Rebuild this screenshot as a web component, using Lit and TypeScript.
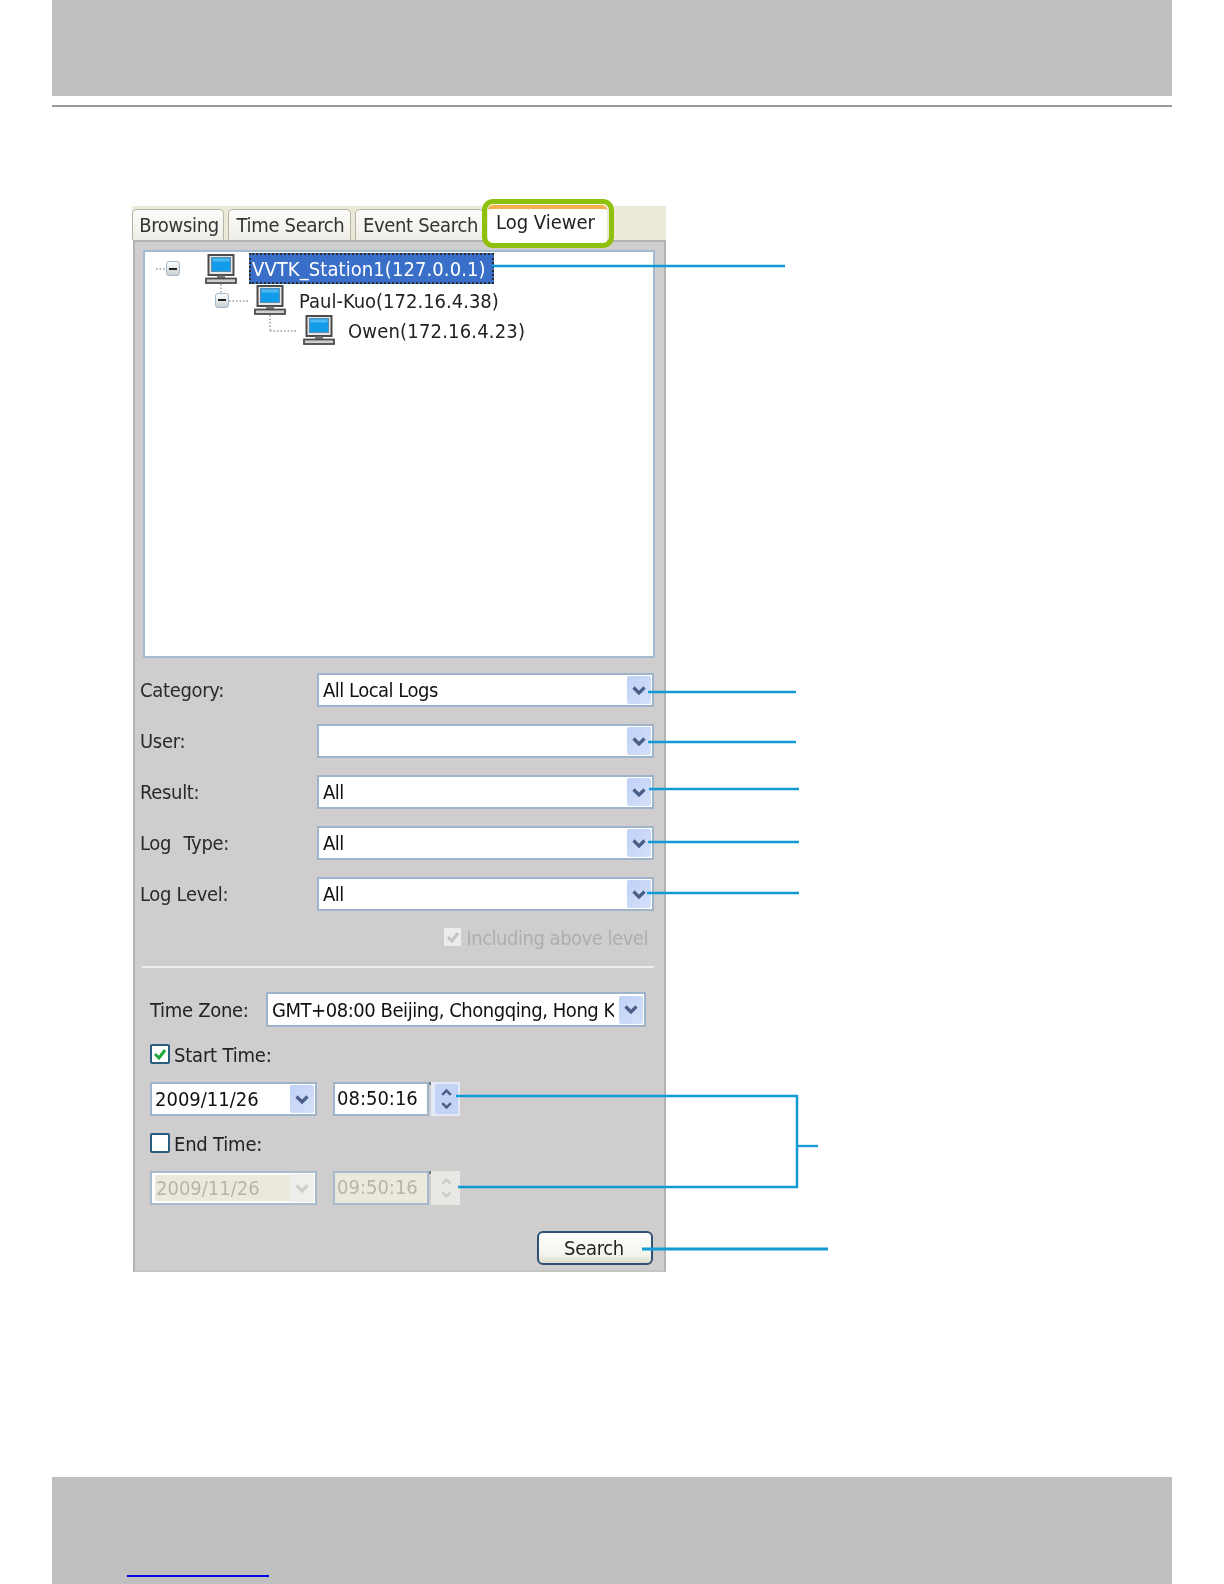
import { LitElement, html, css, svg } from "lit";
import { customElement } from "lit/decorators.js";

const monitor = html`<svg class="monitor" viewBox="0 0 32 30" width="32" height="30">
  <rect x="3.5" y="1" width="25" height="20" fill="#e6e6e6" stroke="#4c4c4c" stroke-width="2" />
  <rect x="6.5" y="3.5" width="19" height="14" fill="#129be8" stroke="#5a8db0" />
  <rect x="7.5" y="4.5" width="17" height="3" fill="#4db9f0" />
  <rect x="12" y="21.5" width="8" height="3" fill="#777" />
  <rect x="1" y="24.5" width="30" height="4.5" fill="#cfcfcf" stroke="#4c4c4c" stroke-width="1.8" />
</svg>`;

const chevron = (cls = "") => html`<svg class="chev ${cls}" viewBox="0 0 14 9" width="14" height="9">
  <path d="M1.5 1.5 L7 7 L12.5 1.5" fill="none" stroke="currentColor" stroke-width="3.2" />
</svg>`;

const expander = html`<span class="exp"><span></span></span>`;

@customElement("app-root")
export class AppRoot extends LitElement {
  static styles = css`
    :host {
      display: block;
      width: 1224px;
      height: 1584px;
      background: #fff;
      font-family: "DejaVu Sans", "Noto Sans", sans-serif;
      font-stretch: condensed;
      font-size: 20px;
      color: #222;
    }
    .page {
      position: relative;
      box-sizing: border-box;
      height: 1584px;
      padding: 0 52px;
      display: flex;
      flex-direction: column;
    }
    .band { background: #c0c0c0; }
    .band.top { height: 96px; flex: none; }
    .rule { height: 2px; margin-top: 9px; background: #999; flex: none; }
    .band.bottom { margin-top: auto; height: 107px; flex: none; padding: 98px 0 0 75px; box-sizing: border-box; }
    .link { width: 142px; height: 1.5px; background: #0000e6; }

    .app { width: 534px; margin: 99px 0 0 80px; flex: none; filter: blur(0.35px); }
    .tabs { height: 34px; background: #ece9d8; display: flex; align-items: flex-end; gap: 4px; }
    .tab {
      box-sizing: border-box;
      height: 31px;
      background: linear-gradient(#fcfcfa, #eeede6);
      border: 1px solid #b5b5aa;
      border-bottom: none;
      border-radius: 5px 5px 0 0;
      display: flex;
      align-items: center;
      justify-content: center;
      white-space: nowrap;
      color: #333;
      letter-spacing: -0.32px;
      padding-left: 2px;
    }
    .tab.active {
      position: relative;
      height: 38px;
      margin-bottom: -3px;
      background: #fff;
      border: none;
      border-top: 4px solid #f5b04c;
      color: #222;
      padding: 0 4px 8px 0;
      letter-spacing: 0;
      z-index: 2;
    }
    .ring {
      position: absolute;
      left: -6px;
      right: -7px;
      top: -10px;
      bottom: -5px;
      border: 5px solid #8fc00e;
      border-radius: 11px;
    }
    .w92 { width: 92px; }
    .w123 { width: 123px; }
    .w129 { width: 129px; }
    .w119 { width: 119px; }

    .panel {
      box-sizing: border-box;
      width: 533px;
      height: 1032px;
      margin-left: 1px;
      background: #cfcdcd;
      border: 2px solid #b3b3b3;
      border-bottom-color: #c4c4c4;
      padding-top: 8px;
    }
    .tree {
      box-sizing: border-box;
      width: 512px;
      height: 408px;
      margin-left: 8px;
      background: #fff;
      border: 2px solid #a3bbd0;
      padding: 1px 0 0 21px;
    }
    .node { display: flex; align-items: center; height: 30px; white-space: nowrap; }
    .node.n1 { height: 31px; }
    .node.n2 { padding-left: 49px; margin-top: 1px; }
    .node.n3 { padding-left: 98px; }
    .slot { width: 14px; flex: none; display: flex; }
    .exp {
      box-sizing: border-box;
      width: 14px;
      height: 15px;
      border: 1.5px solid #a3b8c8;
      border-radius: 3px;
      background: linear-gradient(#fff, #c9cfd2);
      display: flex;
      align-items: center;
      justify-content: center;
    }
    .exp span { width: 8px; height: 2px; background: #222; }
    .monitor { flex: none; margin-left: 25px; }
    .label { margin-left: 13px; color: #222; padding-top: 2px; }
    .n3 .label { letter-spacing: 0.18px; }
    .label.sel {
      margin-left: 12px;
      background: #3a6fc9;
      color: #fff;
      box-sizing: border-box;
      height: 31px;
      width: 245px;
      padding: 0 0 0 1px;
      line-height: 29px;
      letter-spacing: 0.08px;
      border: 2px dotted #2d2a20;
    }

    .fields {
      margin: 15px 0 0 5px;
      display: grid;
      grid-template-columns: 177px 337px;
      row-gap: 17px;
      align-items: center;
      letter-spacing: -0.32px;
    }
    .fname { color: #2a2a2a; }
    .fname.wide { word-spacing: 7px; }
    .combo {
      box-sizing: border-box;
      height: 34px;
      background: #fff;
      border: 2px solid #9db4cb;
      display: flex;
      align-items: center;
      padding: 0 1px 0 4px;
      gap: 4px;
      white-space: nowrap;
      color: #111;
    }
    .combo .val { flex: 1; overflow: hidden; min-width: 0; letter-spacing: -0.5px; }
    .btn {
      flex: none;
      width: 24px;
      height: 28px;
      background: linear-gradient(135deg, #c0d1f6, #d5e0fa);
      border-radius: 2px;
      display: flex;
      align-items: center;
      justify-content: center;
      color: #4a5f88;
    }
    .including {
      margin: 17px 16px 0 0;
      height: 18px;
      display: flex;
      justify-content: flex-end;
      align-items: center;
      gap: 5px;
      color: #aeaeae;
      letter-spacing: -0.48px;
    }
    .including .txt { padding-top: 2px; }
    .ibox { width: 17px; height: 18px; background: #ececec; display: flex; align-items: center; justify-content: center; }
    .sep { height: 2px; width: 512px; margin: 20px 0 0 7px; background: #eeeeee; }

    .times { padding-left: 15px; }
    .tz { margin-top: 24px; display: flex; align-items: center; }
    .tz .name { width: 116px; flex: none; letter-spacing: -0.3px; }
    .tz .combo { width: 380px; height: 35px; }
    .tz .val { letter-spacing: -0.45px; margin-right: 1px; }
    .check { display: flex; align-items: center; gap: 4px; height: 20px; letter-spacing: -0.2px; }
    .check .txt { padding-top: 2px; }
    .box {
      box-sizing: border-box;
      width: 20px;
      height: 20px;
      background: #fff;
      border: 2px solid #2b5d80;
      border-radius: 2px;
      display: flex;
      align-items: center;
      justify-content: center;
    }
    .start { margin-top: 17px; }
    .end { margin-top: 17px; }
    .end .txt { padding-top: 1px; }
    .dt { margin-top: 18px; display: flex; height: 34px; }
    .dt .combo { width: 167px; padding-left: 3px; }
    .dt .combo .val { letter-spacing: 0; }
    .time {
      position: relative;
      box-sizing: border-box;
      width: 96px;
      height: 34px;
      margin-left: 16px;
      background: #fff;
      border: 2px solid #9db4cb;
      padding: 0 0 2px 2px;
      display: flex;
      align-items: center;
      color: #111;
    }
    .time::after {
      content: "";
      position: absolute;
      right: -4px;
      top: -2px;
      width: 2px;
      height: 3px;
      background: #777;
    }
    .spin {
      box-sizing: border-box;
      width: 29px;
      height: 34px;
      margin-left: 2px;
      padding: 2px 2px 2px 4px;
      background: #e3e9f7;
    }
    .spin div {
      height: 100%;
      background: #c3d3f6;
      border-radius: 2px;
      display: flex;
      flex-direction: column;
      align-items: center;
      justify-content: space-evenly;
      color: #4a5f88;
    }
    .spin .chev { width: 11px; height: 7px; }
    .up { transform: scaleY(-1); }
    .off .combo, .off .time { border-color: #a7bacb; }
    .off .combo .val { background: #ebe9dc; height: 26px; line-height: 26px; padding: 0 0 0 1px; margin-right: -4px; }
    .off .time { background: #ebe9dc; }
    .off { color: #b6b6a8; }
    .off .combo, .off .val, .off .time { color: #b6b6a8; }
    .off .btn { background: #eeeeea; color: #d0d0ca; }
    .off .spin { background: #e8e8e4; }
    .off .spin div { background: #e8e8e4; color: #cfcfca; }
    .actions { display: flex; justify-content: flex-end; margin: 26px 11px 0 0; }
    .search {
      box-sizing: border-box;
      width: 116px;
      height: 34px;
      border: 2px solid #2f5272;
      border-radius: 6px;
      background: linear-gradient(#fff, #f4f4ee 70%, #dedcd0);
      display: flex;
      align-items: center;
      justify-content: center;
      padding: 0 2px 1px 0;
      color: #222;
      letter-spacing: -0.3px;
    }
    .overlay { position: absolute; inset: 0; width: 1224px; height: 1584px; pointer-events: none; }
  `;

  private field(label: string, val: string, wide = false) {
    return html`<div class="fname ${wide ? "wide" : ""}">${label}</div>
      <div class="combo"><span class="val">${val}</span><span class="btn">${chevron()}</span></div>`;
  }

  render() {
    const lines = [
      [492, 266, 785, 266, 2.3],
      [648, 692, 796, 692, 2.3],
      [648, 742, 796, 742, 2.3],
      [649, 789, 799, 789, 2.3],
      [648, 842, 799, 842, 2.3],
      [647, 893, 799, 893, 2.3],
      [456, 1096, 798, 1096, 2.5],
      [458, 1187, 798, 1187, 2.5],
      [797, 1095, 797, 1188, 2.5],
      [797, 1146, 818, 1146, 2.3],
      [642, 1249, 828, 1249, 2.8],
    ];
    const dots = [
      [156, 269, 166, 269],
      [221, 284, 221, 294],
      [229, 301, 248, 301],
      [270, 315, 270, 331],
      [270, 331, 297, 331],
    ];
    return html`<div class="page">
      <div class="band top"></div>
      <div class="rule"></div>
      <div class="app">
        <div class="tabs">
          <div class="tab w92">Browsing</div>
          <div class="tab w123">Time Search</div>
          <div class="tab w129">Event Search</div>
          <div class="tab w119 active">Log Viewer<span class="ring"></span></div>
        </div>
        <div class="panel">
          <div class="tree">
            <div class="node n1"><span class="slot">${expander}</span>${monitor}<span class="label sel">VVTK_Station1(127.0.0.1)</span></div>
            <div class="node n2"><span class="slot">${expander}</span>${monitor}<span class="label">Paul-Kuo(172.16.4.38)</span></div>
            <div class="node n3"><span class="slot"></span>${monitor}<span class="label">Owen(172.16.4.23)</span></div>
          </div>
          <div class="fields">
            ${this.field("Category:", "All Local Logs")}
            ${this.field("User:", "")}
            ${this.field("Result:", "All")}
            ${this.field("Log Type:", "All", true)}
            ${this.field("Log Level:", "All")}
          </div>
          <div class="including">
            <span class="ibox"><svg viewBox="0 0 14 14" width="14" height="14"><path d="M2 7 L6 11 L12 3" fill="none" stroke="#c4c4c4" stroke-width="3" /></svg></span>
            <span class="txt">Including above level</span>
          </div>
          <div class="sep"></div>
          <div class="times">
            <div class="tz">
              <span class="name">Time Zone:</span>
              <div class="combo"><span class="val">GMT+08:00 Beijing, Chongqing, Hong Kong</span><span class="btn">${chevron()}</span></div>
            </div>
            <div class="check start">
              <span class="box"><svg viewBox="0 0 14 14" width="14" height="14"><path d="M2 7 L6 11 L12 3" fill="none" stroke="#21a83c" stroke-width="3" /></svg></span>
              <span class="txt">Start Time:</span>
            </div>
            <div class="dt on">
              <div class="combo"><span class="val">2009/11/26</span><span class="btn">${chevron()}</span></div>
              <div class="time">08:50:16</div>
              <div class="spin"><div>${chevron("up")}${chevron()}</div></div>
            </div>
            <div class="check end">
              <span class="box"></span>
              <span class="txt">End Time:</span>
            </div>
            <div class="dt off">
              <div class="combo"><span class="val">2009/11/26</span><span class="btn">${chevron()}</span></div>
              <div class="time">09:50:16</div>
              <div class="spin"><div>${chevron("up")}${chevron()}</div></div>
            </div>
          </div>
          <div class="actions"><div class="search">Search</div></div>
        </div>
      </div>
      <div class="band bottom"><div class="link"></div></div>
      <svg class="overlay" viewBox="0 0 1224 1584">
        ${dots.map(([a, b, c, d]) => svg`<line x1=${a} y1=${b} x2=${c} y2=${d} stroke="#9a9a9a" stroke-width="1.5" stroke-dasharray="1.5 2" />`)}
        ${lines.map(([a, b, c, d, w]) => svg`<line x1=${a} y1=${b} x2=${c} y2=${d} stroke="#129ad6" stroke-width=${w} />`)}
      </svg>
    </div>`;
  }
}
